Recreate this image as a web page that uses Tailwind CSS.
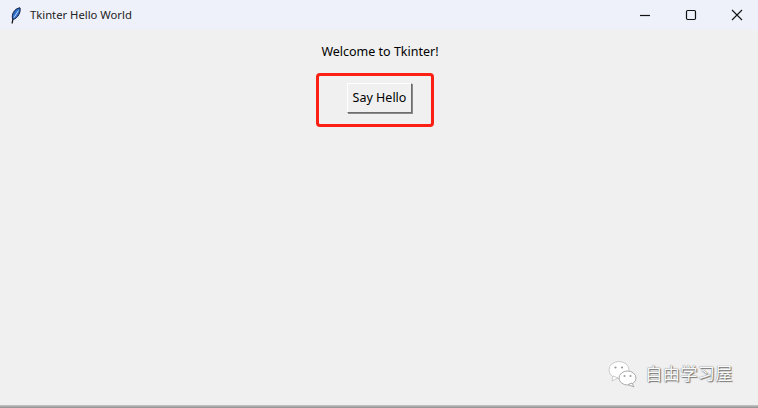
<!DOCTYPE html>
<html><head><meta charset="utf-8"><script src="https://cdn.jsdelivr.net/npm/@tailwindcss/browser@4"></script></head>
<body class="m-0 overflow-hidden">
<div class="relative w-[758px] h-[408px] flex flex-col bg-[#f0f0f0] font-['Noto_Sans','Noto_Sans_CJK_SC',sans-serif] text-black">
  <header class="h-[30px] shrink-0 flex items-center bg-[#eef1fa]">
    <svg class="ml-[10px] w-[12px] h-[17px]" viewBox="0 0 12 17"><path d="M2 16.500 L3.500 10" stroke="#111" stroke-width="1.2" fill="none"/><path d="M2.800 12.500 C1 8 4 1.500 10 0.800 C11 5 8 11.500 2.800 12.500Z" fill="#2f6fc9" stroke="#10203f" stroke-width="1"/><path d="M4 10.500 L8.500 3.500" stroke="#bcd7f5" stroke-width="1"/></svg>
    <span class="ml-[8px] text-[11.25px] leading-none text-[#222]">Tkinter Hello World</span>
    <div class="ml-auto mr-[-2px] flex items-center h-full">
      <button class="w-[46px] h-full flex items-center justify-center"><svg class="w-[12px] h-[12px]" viewBox="0 0 12 12"><path d="M1 6.500H11" stroke="#111" stroke-width="1.2"/></svg></button>
      <button class="w-[46px] h-full flex items-center justify-center"><svg class="w-[12px] h-[12px]" viewBox="0 0 12 12"><rect x="1.500" y="1.500" width="9" height="9" rx="1.2" fill="none" stroke="#111" stroke-width="1.2"/></svg></button>
      <button class="w-[46px] h-full flex items-center justify-center"><svg class="w-[12px] h-[12px]" viewBox="0 0 12 12"><path d="M1 1L11 11M11 1L1 11" stroke="#111" stroke-width="1.1"/></svg></button>
    </div>
  </header>
  <main class="flex-1 flex flex-col items-center">
    <p class="mt-[13px] ml-[2px] text-[12.5px] leading-[18px]">Welcome to Tkinter!</p>
    <button class="mt-[22px] ml-[1px] w-[65px] h-[30px] bg-[#f0f0f0] text-[12.5px] border border-t-white border-l-white border-r-[#6d6d6d] border-b-[#6d6d6d] shadow-[1px_1px_0_#8a8a8a]">Say Hello</button>
  </main>
  <div class="absolute left-[316px] top-[73px] w-[118px] h-[54px] rounded-[4px] border-[3px] border-[#fb1f14]"></div>
  <div class="absolute left-[608px] top-[360px] flex items-center gap-[7px]">
    <svg class="w-[30px] h-[28px]" viewBox="0 0 30 28"><ellipse cx="11" cy="10" rx="10" ry="8.500" fill="#fff" stroke="#ccc"/><path d="M5 16L4 21L10 18Z" fill="#fff" stroke="#ccc"/><ellipse cx="19.500" cy="18" rx="8.500" ry="7" fill="#fff" stroke="#aaa"/><path d="M24 23L26 27L20 24.500Z" fill="#fff" stroke="#aaa"/><circle cx="7.500" cy="7.500" r="1.100" fill="#999"/><circle cx="14" cy="7.500" r="1.100" fill="#999"/><circle cx="16.500" cy="16" r="1" fill="#999"/><circle cx="22.500" cy="16" r="1" fill="#999"/></svg>
    <span class="text-[17.5px] leading-none text-[#fafafa] [text-shadow:0_0_1px_#555,1px_1px_1px_#777]">自由学习屋</span>
  </div>
  <div class="absolute left-0 bottom-0 w-full h-[3px] bg-gradient-to-b from-[#c8c8c8] to-[#8f8f8f]"></div>
</div>
</body></html>
